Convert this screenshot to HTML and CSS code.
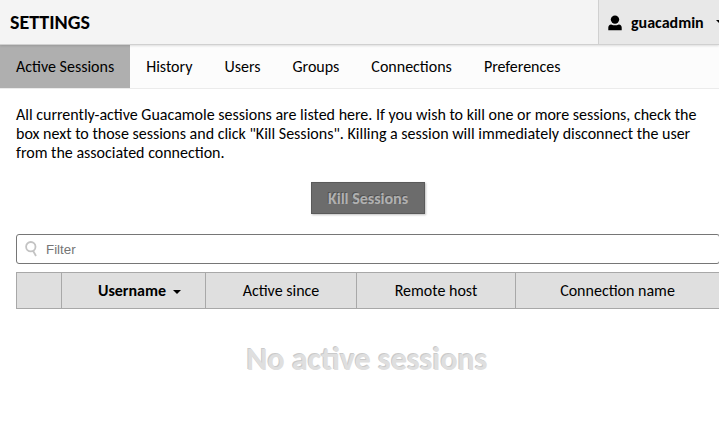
FILE: index.html
```html
<!DOCTYPE html>
<html lang="en">
<head>
<meta charset="utf-8">
<title>Settings</title>
<link rel="stylesheet" href="styles.css">
</head>
<body>
<div class="settings">
  <header class="header">
    <h2>SETTINGS</h2>
    <div class="user-menu">
      <svg class="user-icon" width="14" height="16" viewBox="0 0 14 16"><circle cx="7" cy="4.6" r="4.2"/><path d="M.3 15.2V12.5Q.3 9.8 3.2 9.4Q7 11.2 10.8 9.4Q13.7 9.8 13.7 12.5V15.2Z"/></svg>
      <span class="user-name">guacadmin</span>
      <span class="caret"></span>
    </div>
  </header>
  <nav class="tabs">
    <a class="tab current">Active Sessions</a>
    <a class="tab">History</a>
    <a class="tab">Users</a>
    <a class="tab">Groups</a>
    <a class="tab">Connections</a>
    <a class="tab">Preferences</a>
  </nav>
  <main class="content">
    <p>All currently-active Guacamole sessions are listed here. If you wish to kill one or more sessions, check the<br>box next to those sessions and click "Kill Sessions". Killing a session will immediately disconnect the user<br>from the associated connection.</p>
    <div class="actions"><button class="kill" disabled>Kill Sessions</button></div>
    <div class="filter">
      <svg width="12" height="16" viewBox="0 0 12 16"><circle cx="5.8" cy="5.7" r="4.7"/><path d="M8 9.7L11 15"/></svg>
      <span>Filter</span>
    </div>
    <table class="sessions">
      <colgroup><col class="c-select"><col class="c-user"><col class="c-since"><col class="c-host"><col class="c-name"></colgroup>
      <thead><tr><th></th><th class="sorted">Username<span class="caret"></span></th><th>Active since</th><th>Remote host</th><th>Connection name</th></tr></thead>
    </table>
    <p class="empty">No active sessions</p>
  </main>
</div>
</body>
</html>
```
FILE: styles.css
```css
* { box-sizing: border-box; }
html, body { overflow: hidden; }
body {
  margin: 0;
  background: #fff;
  color: #000;
  font-family: Carlito, Lato, sans-serif;
  font-size: 16px;
  line-height: 19px;
}
.header {
  display: flex;
  justify-content: space-between;
  position: relative;
  height: 45px;
  background: #f4f4f4;
  border-bottom: 1px solid #d0d0d0;
  box-shadow: 0 1px 2px rgba(0, 0, 0, .12);
}
h2 { margin: 0; padding-left: 10px; font-size: 20px; line-height: 44px; }
.user-menu {
  display: flex;
  align-items: center;
  width: 121px;
  padding-left: 9px;
  background: #e8e8e8;
  border-left: 1px solid #d0d0d0;
  font-weight: bold;
  white-space: nowrap;
}
.user-icon { flex: none; margin: 2px 9px 0 0; }
.user-name { flex: none; width: 85px; }
.caret {
  display: inline-block;
  flex: none;
  border: 4px solid transparent;
  border-top-color: #000;
  border-bottom: 0;
}
.tabs { display: flex; height: 44px; background: #fcfcfc; border-bottom: 1px solid #ebebeb; }
.tab { padding: 0 16px; line-height: 44px; white-space: nowrap; }
.current { background: #afafaf; }
.content { width: 720px; padding: 16px 0 0 16px; }
p { margin: 0; white-space: nowrap; }
.actions { display: flex; justify-content: center; padding-top: 20px; }
.kill {
  width: 114px;
  height: 32px;
  padding: 0;
  background: #6c6c6c;
  border: 1px solid #5a5a5a;
  box-shadow: 1px 1px 2px rgba(0, 0, 0, .25);
  color: #b0b0b0;
  font: bold 16px Carlito, Lato, sans-serif;
  text-shadow: -1px -1px rgba(0, 0, 0, .25);
}
.filter {
  display: flex;
  align-items: center;
  height: 30px;
  margin-top: 20px;
  padding-left: 8px;
  border: 1px solid #767676;
  border-radius: 3px;
  color: #757575;
  font: 13.33px "Liberation Sans", sans-serif;
}
.filter svg { margin-right: 9px; fill: none; stroke: #c3c3c3; stroke-width: 1.8; }
.sessions {
  width: 704px;
  height: 37px;
  margin-top: 8px;
  table-layout: fixed;
  border-collapse: collapse;
}
.c-select { width: 45px; }
.c-user { width: 144px; }
.c-since { width: 151px; }
.c-host { width: 159px; }
th { padding: 0; background: #dfdfdf; border: 1px solid #a8a8a8; font-weight: normal; }
.sorted { padding-left: 12px; font-weight: bold; }
.sorted .caret { margin-left: 7px; vertical-align: 2px; }
.empty {
  margin: 31px 2px 0 0;
  font-size: 32px;
  font-weight: bold;
  line-height: 40px;
  text-align: center;
  color: #dfdfdf;
  text-shadow: -1px -1px #cacaca;
}
```
